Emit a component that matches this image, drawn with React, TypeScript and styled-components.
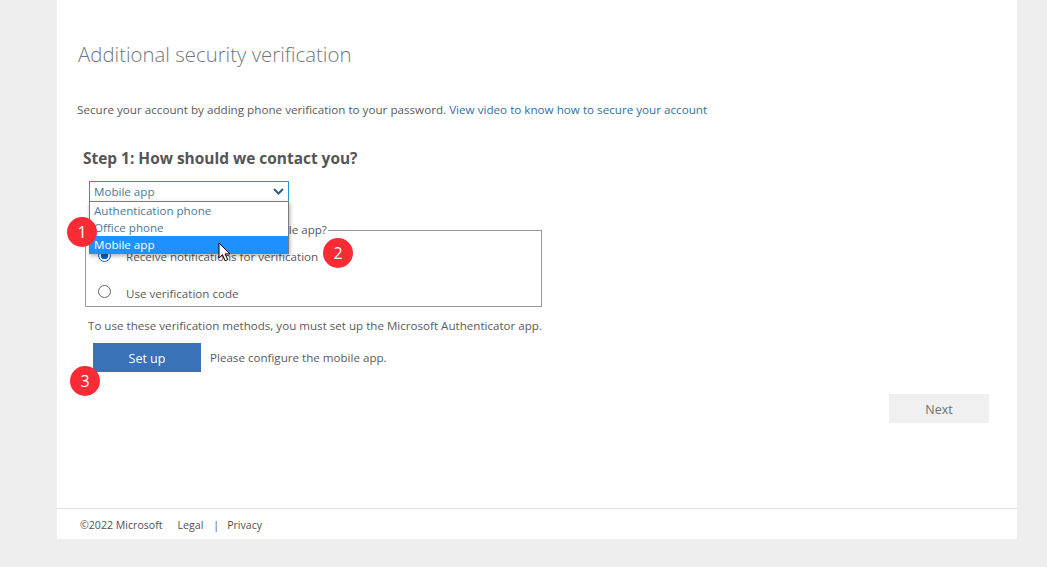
import React from "react";
import styled, { createGlobalStyle } from "styled-components";

const GlobalStyle = createGlobalStyle`
  html, body {
    margin: 0;
    padding: 0;
    background: #eeeeee;
    font-family: "Open Sans", "Noto Sans", sans-serif;
  }
  * {
    box-sizing: border-box;
  }
`;

const Page = styled.div`
  width: 1047px;
  height: 567px;
  padding: 0 30px 28px 57px;
  overflow: hidden;
`;

const Card = styled.main`
  position: relative;
  height: 539px;
  background: #fff;
  display: flex;
  flex-direction: column;
`;

const Content = styled.div`
  flex: 1;
  padding: 40px 28px 0 20px;
  display: flex;
  flex-direction: column;
`;

const Title = styled.h1`
  margin: 0 0 0 1px;
  font-size: 20.4px;
  line-height: 29px;
  font-weight: 300;
  color: #73787c;
`;

const Intro = styled.p`
  margin: 32px 0 0;
  font-size: 11.67px;
  line-height: 18px;
  color: #5a5a5a;
  a {
    color: #2f6f9f;
    text-decoration: none;
  }
`;

const StepTitle = styled.h2`
  margin: 29px 0 0 6px;
  font-size: 15.45px;
  line-height: 20px;
  font-weight: 700;
  color: #555;
`;

const SelectWrap = styled.div`
  position: relative;
  width: 200px;
  margin: 13px 0 0 12px;
`;

const SelectBox = styled.div`
  height: 21px;
  border: 1px solid #1c9bd1;
  padding: 0 4px;
  display: flex;
  align-items: center;
  justify-content: space-between;
  font-size: 11.6px;
  color: #4a7a99;
`;

const Options = styled.ul`
  position: absolute;
  z-index: 2;
  top: 20px;
  left: 0;
  width: 200px;
  height: 53px;
  margin: 0;
  padding: 0;
  list-style: none;
  background: #fff;
  border: 1px solid #7a7a7a;
  box-shadow: 1px 2px 4px rgba(0, 0, 0, 0.3);
`;

const Option = styled.li<{ $active?: boolean }>`
  height: 17px;
  line-height: 17px;
  padding: 0 4px;
  font-size: 11.6px;
  color: ${({ $active }) => ($active ? "#fff" : "#4a7a99")};
  background: ${({ $active }) => ($active ? "#1e90ff" : "transparent")};
`;

const Methods = styled.fieldset`
  width: 457px;
  height: 82px;
  margin: 23px 0 0 8px;
  padding: 0;
  border: 1px solid #999;
  display: flex;
  flex-direction: column;

  legend {
    margin-left: 9px;
    padding: 0 1px;
    font-size: 11.6px;
    line-height: 10px;
    color: #5a5a5a;
  }
`;

const RadioRow = styled.label<{ $first?: boolean }>`
  display: flex;
  align-items: center;
  height: 18px;
  margin-left: 12px;
  margin-top: ${({ $first }) => ($first ? "12px" : "19px")};
  font-size: 11.6px;
  color: #5a5a5a;
`;

const Radio = styled.span<{ $checked?: boolean }>`
  width: 13px;
  height: 13px;
  margin: ${({ $checked }) => ($checked ? "-2px" : "-3px")} 15px 0 0;
  border-radius: 50%;
  border: 1px solid ${({ $checked }) => ($checked ? "#0a5fc4" : "#666")};
  background: ${({ $checked }) =>
    $checked ? "radial-gradient(circle, #0a5fc4 0 3.5px, #fff 4px)" : "#fff"};
`;

const Note = styled.p`
  margin: 10px 0 0 11px;
  font-size: 11.6px;
  line-height: 18px;
  color: #5a5a5a;
`;

const SetupRow = styled.div`
  display: flex;
  align-items: center;
  gap: 9px;
  margin: 8px 0 0 16px;
  font-size: 11.6px;
  color: #5a5a5a;
`;

const SetupButton = styled.button`
  width: 108px;
  height: 29px;
  border: 0;
  padding: 2px 0 0;
  background: #3a72b8;
  color: #fff;
  font: 12.5px "Open Sans", sans-serif;
`;

const NextRow = styled.div`
  display: flex;
  justify-content: flex-end;
  margin-top: 22px;
`;

const NextButton = styled.button`
  width: 100px;
  height: 29px;
  border: 0;
  padding: 2px 0 0;
  background: #f0f0f0;
  color: #6d6d6d;
  font: 12.5px "Open Sans", sans-serif;
`;

const Footer = styled.footer`
  height: 31px;
  border-top: 1px solid #dfe1e6;
  padding: 2px 0 0 23px;
  display: flex;
  align-items: center;
  font-size: 10.6px;
  color: #505050;
`;

const FooterLink = styled.a<{ $gap: number }>`
  color: #505050;
  margin-left: ${({ $gap }) => $gap}px;
`;

const Badge = styled.span<{ $x: number; $y: number }>`
  position: absolute;
  z-index: 3;
  left: ${({ $x }) => $x}px;
  top: ${({ $y }) => $y}px;
  width: 30px;
  height: 30px;
  border-radius: 50%;
  background: #fb2b36;
  color: #fff;
  font-size: 16px;
  line-height: 30px;
  text-align: center;
`;

const Pointer = styled.svg`
  position: absolute;
  z-index: 3;
  left: 161px;
  top: 242px;
`;

export default function App() {
  return (
    <Page>
      <GlobalStyle />
      <Card>
        <Content>
          <Title>Additional security verification</Title>
          <Intro>
            Secure your account by adding phone verification to your password.{" "}
            <a href="#">View video to know how to secure your account</a>
          </Intro>
          <StepTitle>Step 1: How should we contact you?</StepTitle>
          <SelectWrap>
            <SelectBox>
              Mobile app
              <svg width="11" height="7" viewBox="0 0 11 7">
                <path d="M1 1l4.5 4.5L10 1" fill="none" stroke="#2b5f85" strokeWidth="2" />
              </svg>
            </SelectBox>
            <Options>
              <Option>Authentication phone</Option>
              <Option>Office phone</Option>
              <Option $active>Mobile app</Option>
            </Options>
          </SelectWrap>
          <Methods>
            <legend>How would you like to use the mobile app?</legend>
            <RadioRow $first>
              <Radio $checked />
              Receive notifications for verification
            </RadioRow>
            <RadioRow>
              <Radio />
              Use verification code
            </RadioRow>
          </Methods>
          <Note>To use these verification methods, you must set up the Microsoft Authenticator app.</Note>
          <SetupRow>
            <SetupButton>Set up</SetupButton>
            Please configure the mobile app.
          </SetupRow>
          <NextRow>
            <NextButton>Next</NextButton>
          </NextRow>
        </Content>
        <Footer>
          ©2022 Microsoft
          <FooterLink $gap={15}>Legal</FooterLink>
          <FooterLink $gap={10}>|</FooterLink>
          <FooterLink $gap={8}>Privacy</FooterLink>
        </Footer>
        <Badge $x={10} $y={217}>1</Badge>
        <Badge $x={266} $y={238}>2</Badge>
        <Badge $x={13} $y={366}>3</Badge>
        <Pointer width="14" height="21" viewBox="0 0 14 21">
          <path d="M1 1v15l3.5-3.2 2.6 6 2.6-1.1-2.6-5.8h4.8z" fill="#fff" stroke="#000" strokeWidth="1" />
        </Pointer>
      </Card>
    </Page>
  );
}
